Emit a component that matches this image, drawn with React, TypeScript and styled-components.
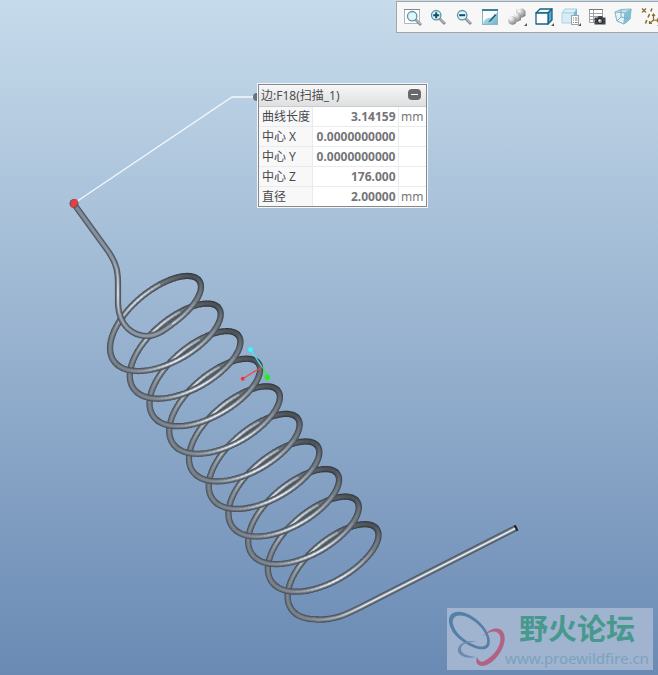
import React from "react";
import styled, { createGlobalStyle } from "styled-components";

const GlobalStyle = createGlobalStyle`
  *, *::before, *::after { box-sizing: border-box; }
  html, body { margin: 0; padding: 0; }
  body { font-family: "Noto Sans", "Noto Sans CJK SC", sans-serif; overflow: hidden; }
`;

const Viewport = styled.main`
  position: relative;
  min-height: 100vh;
  overflow: hidden;
  background: linear-gradient(#c6dbeb 0%, #6a8ab4 100%);
`;

const Scene = styled.svg`
  position: absolute;
  top: 0;
  left: 0;
  display: block;
  pointer-events: none;
`;

const TopBar = styled.header`
  display: flex;
  justify-content: flex-end;
  padding-top: 1px;
`;

const Toolbar = styled.div`
  display: flex;
  align-items: center;
  flex: none;
  height: 32px;
  margin-right: -5px;
  padding-left: 2px;
  background: #f7f7f7;
  border: 1px solid #a3a6a9;
  border-right: 0;
`;

const ToolButton = styled.button<{ $menu?: boolean }>`
  position: relative;
  display: grid;
  place-items: center;
  width: ${(p) => (p.$menu ? 27 : 26)}px;
  height: 28px;
  padding: 0;
  border: 0;
  background: transparent;
  cursor: pointer;
  &:hover { background: #dfeaf3; }
  &::after {
    content: "";
    display: ${(p) => (p.$menu ? "block" : "none")};
    position: absolute;
    right: 3px;
    bottom: 5px;
    border-left: 3px solid transparent;
    border-bottom: 3px solid #555;
  }
`;

const Panel = styled.section`
  position: absolute;
  top: 83px;
  left: 257px;
  background: #fff;
  border: 1px solid #f4f7f9;
`;

const PanelInner = styled.div`
  border: 1px solid #85898e;
`;

const PanelHeader = styled.div`
  display: flex;
  align-items: center;
  justify-content: space-between;
  height: 22px;
  padding: 0 5px 0 2px;
  background: linear-gradient(#f7f7f7, #dedfe0);
  border-bottom: 1px solid #c9ccce;
`;

const PanelTitle = styled.h2`
  margin: 0;
  font-size: 12px;
  line-height: 20px;
  font-weight: 400;
  color: #4c4c4f;
`;

const Collapse = styled.button`
  display: grid;
  place-items: center;
  width: 13px;
  height: 11px;
  margin-bottom: 2px;
  padding: 0;
  border: 0;
  border-radius: 4px;
  background: #68686c;
  cursor: pointer;
  &::before {
    content: "";
    width: 7px;
    height: 1px;
    background: #fff;
  }
`;

const Table = styled.table`
  border-collapse: collapse;
  font-size: 12px;
  line-height: 19px;
  tr + tr { border-top: 1px solid #e9ebef; }
`;

const Label = styled.th`
  width: 53px;
  padding: 0 0 0 3px;
  text-align: left;
  font-weight: 400;
  white-space: nowrap;
  color: #48484b;
  background: #f8f8f9;
`;

const Value = styled.td`
  width: 86px;
  height: 19px;
  padding: 0 2px;
  text-align: right;
  font-weight: 700;
  color: #747477;
  border-left: 1px solid #e9ebef;
`;

const Unit = styled.td`
  width: 28px;
  padding: 0 2px;
  text-align: center;
  color: #77777a;
  border-left: 1px solid #e9ebef;
`;

const Watermark = styled.aside`
  position: absolute;
  right: 5px;
  bottom: 5px;
  display: flex;
  width: 206px;
  height: 62px;
  background: #a0b3cf;
`;

const WatermarkText = styled.div`
  display: flex;
  flex-direction: column;
  align-items: center;
  flex: 1;
  padding-right: 4px;
  white-space: nowrap;
`;

const SiteName = styled.strong`
  font-family: "Noto Sans CJK SC", sans-serif;
  font-size: 29px;
  line-height: 38px;
  font-weight: 700;
  color: #47998d;
`;

const SiteLink = styled.a`
  font-family: "Noto Sans", sans-serif;
  font-size: 15px;
  line-height: 24px;
  color: #7aa2bf;
  text-decoration: none;
`;

/* ---- Spring geometry ---- */

const TURN = Math.PI * 2;

const helix = (a: number): [number, number] => [
  153.5 + 3.14 * a + 50.3 * Math.cos(a + 0.93),
  316.6 + 4.39 * a - 40.4 * Math.cos(a),
];

const bump = (a: number, centre: number, spread: number) => {
  const d = Math.atan2(Math.sin(a - centre), Math.cos(a - centre));
  return Math.exp(-(d * d) / (2 * spread * spread));
};

const mix = (from: number[], to: number[], t: number) =>
  `rgb(${from.map((v, i) => Math.round(v + (to[i] - v) * t)).join(",")})`;

const point = ([x, y]: [number, number]) => `${x.toFixed(2)} ${y.toFixed(2)}`;

function Strand({ from, to }: { from: number; to: number }) {
  const count = Math.ceil((to - from) / 0.08);
  const step = (to - from) / count;
  const parts = Array.from({ length: count }, (_, i) => {
    const a = from + i * step;
    const mid = a + step / 2;
    return {
      d: `M${point(helix(a - 0.01))}L${point(helix(mid))}L${point(helix(a + step + 0.01))}`,
      dark: bump(mid, -0.25, 0.5),
      light: Math.min(1, bump(mid, 4.05, 0.4) + 0.85 * bump(mid, 1.05, 0.36)),
    };
  });
  return (
    <g fill="none" strokeLinejoin="round">
      {parts.map((p, i) => (
        <path key={`o${i}`} d={p.d} strokeWidth="6.2" stroke={mix([75, 82, 91], [51, 56, 62], p.dark)} />
      ))}
      {parts.map((p, i) => (
        <path key={`m${i}`} d={p.d} strokeWidth="4.4" stroke={mix([100, 108, 117], [66, 72, 79], p.dark)} />
      ))}
      {parts.map((p, i) => (
        <path
          key={`s${i}`}
          d={p.d}
          strokeWidth="2.8"
          stroke={p.light > p.dark ? mix([118, 126, 135], [150, 159, 168], p.light) : mix([118, 126, 135], [76, 82, 88], p.dark)}
        />
      ))}
      {parts.map((p, i) => (
        <path
          key={`h${i}`}
          d={p.d}
          strokeWidth="1.4"
          stroke={p.light > p.dark ? mix([125, 133, 142], [232, 239, 245], p.light) : mix([125, 133, 142], [78, 84, 91], p.dark)}
        />
      ))}
    </g>
  );
}

function Wire({ d, shine }: { d: string; shine: string }) {
  return (
    <g fill="none">
      <path d={d} strokeWidth="6.2" stroke="#4b535d" />
      <path d={d} strokeWidth="4.4" stroke="#69727c" />
      <path d={d} strokeWidth="2.8" stroke="#848d97" />
      <path d={d} strokeWidth="1.6" stroke={shine} />
    </g>
  );
}

const turns = Array.from({ length: 10 }, (_, k) => k);

function Spring() {
  return (
    <g>
      {turns.map((k) => (
        <Strand key={`b${k}`} from={k * TURN - 0.55} to={k * TURN + 2.75} />
      ))}
      <Strand from={-2} to={-0.5} />
      {turns.slice(0, 9).map((k) => (
        <Strand key={`f${k}`} from={k * TURN + 2.7} to={k * TURN + 5.8} />
      ))}
      <Strand from={9 * TURN + 2.7} to={9 * TURN + 3.3} />
      <Wire
        d="M74 204L108 251C117 264 118 272 118 285V304C119 326 133 336 147 336C156 336 163 331 172 324.4"
        shine="url(#leadShine)"
      />
      <Wire d="M316 619.7C337 620 349 613 362 606.5L516 528" shine="url(#tailShine)" />
      <path d="M514.7 525.2L517.5 530.8" stroke="#20242a" strokeWidth="2" />
    </g>
  );
}

function ModelScene() {
  return (
    <Scene width="658" height="675" viewBox="0 0 658 675" role="img" aria-label="弹簧模型">
      <defs>
        <linearGradient id="leadShine" gradientUnits="userSpaceOnUse" x1="0" y1="204" x2="0" y2="336">
          <stop offset="0" stopColor="#7f8993" />
          <stop offset=".4" stopColor="#8e98a3" />
          <stop offset=".68" stopColor="#e3eaf0" />
          <stop offset=".85" stopColor="#a0aab4" />
          <stop offset="1" stopColor="#8f99a3" />
        </linearGradient>
        <linearGradient id="tailShine" gradientUnits="userSpaceOnUse" x1="316" y1="0" x2="516" y2="0">
          <stop offset="0" stopColor="#858e98" />
          <stop offset=".25" stopColor="#dfe6ec" />
          <stop offset="1" stopColor="#e3edf5" />
        </linearGradient>
      </defs>
      <path d="M76 202L232 97H257" fill="none" stroke="#f3f8fb" strokeWidth="1.3" />
      <circle cx="257" cy="97" r="4" fill="#6c7178" />
      <Spring />
      <circle cx="74" cy="203.5" r="4.5" fill="#555c64" />
      <path d="M71 201L76 199L78 202L76 206L72 208L71 205Z" fill="#f4383c" />
      <g strokeWidth="1.3">
        <path d="M250.5 349.5L262 367" stroke="#43e8f0" />
        <path d="M262.5 367L267.5 377" stroke="#3fe83a" />
        <path d="M262 367L243 378.5" stroke="#ea4a50" />
      </g>
      <circle cx="250.5" cy="349.5" r="2.5" fill="#3df5fb" />
      <circle cx="267.3" cy="377.3" r="2.8" fill="#21f021" />
      <circle cx="242.7" cy="378.7" r="2" fill="#fb3036" />
    </Scene>
  );
}

/* ---- Toolbar icons ---- */

const Icon = styled.svg`
  display: block;
  width: 20px;
  height: 20px;
`;

const Lens = ({ x = 0, y = 0, children }: { x?: number; y?: number; children?: React.ReactNode }) => (
  <g transform={`translate(${x} ${y})`}>
    <path d="M10.8 10.8L16 16" stroke="#8b8d91" strokeWidth="2.8" />
    <path d="M11.5 11L15.5 15" stroke="#d5d6d8" strokeWidth="1" />
    <circle cx="7.2" cy="7.2" r="4.7" fill="#e2f4fa" stroke="#5c93a9" strokeWidth="1.3" />
    {children}
  </g>
);

const icons: { name: string; menu?: boolean; art: React.ReactNode }[] = [
  {
    name: "重新调整",
    art: (
      <>
        <path d="M3 2.5H17.5V16.5H2.5V2.5" fill="#fff" stroke="#b4b6b8" />
        <path d="M2 2.5H18" stroke="#85898d" />
        <Lens x={3} y={2} />
      </>
    ),
  },
  { name: "放大", art: <Lens x={1} y={1}><path d="M4.2 7.2H10.2M7.2 4.2V10.2" stroke="#0b5275" strokeWidth="2" /></Lens> },
  { name: "缩小", art: <Lens x={1} y={1}><path d="M4.2 7.2H10.2" stroke="#0b5275" strokeWidth="2" /></Lens> },
  {
    name: "重画",
    art: (
      <>
        <rect x="2.5" y="2.5" width="15" height="15" fill="url(#sheet)" stroke="#8fb5c3" />
        <path d="M2 3H18" stroke="#3f8099" strokeWidth="2" />
        <path d="M3 4H17.5Q15 11 9 11Q4 11.5 3 17Z" fill="#f8fcfd" />
        <path d="M15 7L9.5 13.5L8 15.5L11 14L16.5 8Z" fill="#1d6581" />
      </>
    ),
  },
  {
    name: "渲染选项",
    menu: true,
    art: (
      <>
        <path d="M9 2.5L16 1.5L18.5 4V9L14 11L9 9Z" fill="url(#metal)" />
        <path d="M7 8L11 5L14 8V13L10 15Z" fill="url(#metal)" />
        <circle cx="5.5" cy="13.5" r="4.3" fill="url(#metal)" />
      </>
    ),
  },
  {
    name: "显示样式",
    menu: true,
    art: (
      <g stroke="#176383" strokeWidth="1.3" strokeLinejoin="round">
        <path d="M2 6L6 2H18L14 6Z" fill="#e9f6fa" />
        <path d="M14 6L18 2V13L14 17Z" fill="#58a9c5" />
        <path d="M2 6H14V17H2Z" fill="#fff" />
      </g>
    ),
  },
  {
    name: "已保存方向",
    menu: true,
    art: (
      <>
        <path d="M1 6L4 2H16L13 6Z" fill="#d9f1f8" stroke="#a5ccda" />
        <path d="M1 6H13V16H1Z" fill="#d3eef6" stroke="#b4d3de" />
        <path d="M13 6L16 2V9L13 13Z" fill="#6abcd4" />
        <rect x="10.5" y="8.5" width="7" height="9" fill="#fff" stroke="#a0a3a6" />
        <path d="M12 11H13M14 11H16.5M12 13H13M14 13H16.5M12 15.5H13M14 15.5H16.5" stroke="#85898d" />
      </>
    ),
  },
  {
    name: "视图管理器",
    art: (
      <>
        <path d="M2.5 2.5H15.5V15.5H2.5Z" fill="#fff" stroke="#a1a3a6" />
        <path d="M2 2.5H16" stroke="#777a7d" />
        <path d="M3 6.5H16M3 9.5H15M3 12.5H15M6.5 3V15" stroke="#a1a3a6" />
        <path d="M7.5 10.5H10.5L11.5 9H15L16 10.5H18.5V17.5H7.5Z" fill="#414347" />
        <circle cx="13" cy="14" r="2.6" fill="#8c9095" stroke="#1f2124" />
        <circle cx="12.5" cy="13.5" r="1" fill="#fff" />
      </>
    ),
  },
  {
    name: "透视图",
    art: (
      <g stroke="#8db9c8" strokeLinejoin="round">
        <path d="M2 5L8 2.5L18 2L17 12L11 17L4 14Z" fill="#b9e1ed" />
        <path d="M2 5L12 6L11 17L4 14Z" fill="#e3f3f8" />
        <path d="M12 6L18 2L17 12L11 17Z" fill="#7dc1d6" />
        <path d="M8 3V10L4 14M8 10L16 11.5" fill="none" stroke="#7aafc1" />
      </g>
    ),
  },
  {
    name: "基准显示过滤器",
    menu: true,
    art: (
      <g fill="none" stroke="#8b6c2e" strokeWidth="1.2">
        <path d="M2 1.5L6 5.5M6 1.5L2 5.5" />
        <path d="M12 1.5L10.8 4.5M9.5 7L8 10.5M6.8 13L5.5 16.5" strokeWidth="1.6" />
        <path d="M13.5 7.5V13L19 13.5M13.5 13L9.5 16.5M12 9L13.5 7L15 9M17 11.5L19 13.5L17 15M9.5 14V16.5H12" />
      </g>
    ),
  },
];

const rows = [
  ["曲线长度", "3.14159", "mm"],
  ["中心 X", "0.0000000000", ""],
  ["中心 Y", "0.0000000000", ""],
  ["中心 Z", "176.000", ""],
  ["直径", "2.00000", "mm"],
];

function WatermarkLogo() {
  return (
    <svg width="58" height="62" viewBox="0 0 58 62" aria-hidden="true">
      <path
        fillRule="evenodd"
        fill="#557fa9"
        d="M2 14C1 3 12 1 23 7C36 14 46 29 42 38C38 45 25 40 15 33C7 27 3 21 2 14ZM6 16C8 24 14 29 20 33C29 39 38 41 40 35C42 27 33 16 22 10C12 5 4 8 6 16Z"
      />
      <path d="M31 34C20 31 10 36 11 43C12 48 19 51 29 49C19 48 14 45 14 41C14 36 22 33 31 34Z" fill="#6b8bb0" />
      <path d="M36 28C44 19 54 18 57 26C61 38 47 57 36 58C30 58 28 54 30 49C32 54 35 55 39 52C49 46 55 35 53 28C51 22 44 22 36 28Z" fill="#b26284" />
    </svg>
  );
}

export default function App() {
  return (
    <Viewport>
      <GlobalStyle />
      <ModelScene />
      <TopBar>
        <Toolbar role="toolbar" aria-label="视图">
          {icons.map((icon) => (
            <ToolButton key={icon.name} type="button" aria-label={icon.name} $menu={icon.menu}>
              <Icon viewBox="0 0 20 20" aria-hidden="true">
                <defs>
                  <radialGradient id="metal" cx=".3" cy=".25" r=".8">
                    <stop offset="0" stopColor="#fff" />
                    <stop offset="1" stopColor="#7f8183" />
                  </radialGradient>
                  <linearGradient id="sheet" x1="0" y1="0" x2="1" y2="1">
                    <stop offset="0" stopColor="#d5edf4" />
                    <stop offset="1" stopColor="#6fb4c9" />
                  </linearGradient>
                </defs>
                {icon.art}
              </Icon>
            </ToolButton>
          ))}
        </Toolbar>
      </TopBar>
      <Panel aria-label="测量结果">
        <PanelInner>
          <PanelHeader>
            <PanelTitle>边:F18(扫描_1)</PanelTitle>
            <Collapse type="button" aria-label="折叠" />
          </PanelHeader>
          <Table>
            <tbody>
              {rows.map(([label, value, unit]) => (
                <tr key={label}>
                  <Label scope="row">{label}</Label>
                  <Value>{value}</Value>
                  <Unit>{unit}</Unit>
                </tr>
              ))}
            </tbody>
          </Table>
        </PanelInner>
      </Panel>
      <Watermark>
        <WatermarkLogo />
        <WatermarkText>
          <SiteName>野火论坛</SiteName>
          <SiteLink href="http://www.proewildfire.cn">www.proewildfire.cn</SiteLink>
        </WatermarkText>
      </Watermark>
    </Viewport>
  );
}
